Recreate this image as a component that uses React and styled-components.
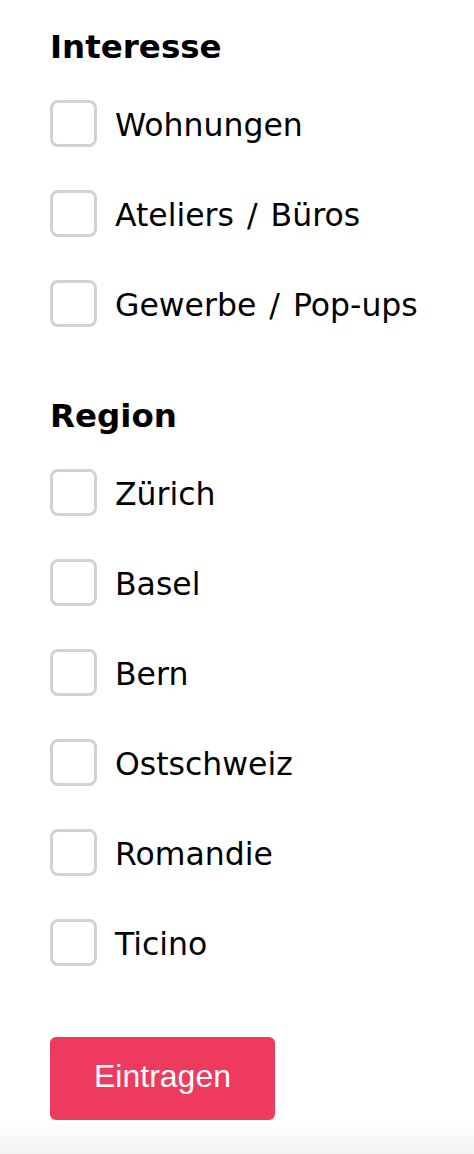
import React from 'react'
import styled, { createGlobalStyle } from 'styled-components'

const GlobalStyle = createGlobalStyle`
  html, body {
    margin: 0;
    padding: 0;
  }
  body {
    font-family: 'DejaVu Sans', Verdana, sans-serif;
    color: #000;
  }
`

const groups = [
  { id: 'interesse', title: 'Interesse', options: ['Wohnungen', 'Ateliers / Büros', 'Gewerbe / Pop-ups'] },
  { id: 'region', title: 'Region', options: ['Zürich', 'Basel', 'Bern', 'Ostschweiz', 'Romandie', 'Ticino'] },
]

const App = () => {
  return (
    <>
      <GlobalStyle />
      <Page>
        <Form onSubmit={(e) => e.preventDefault()}>
          {groups.map((group) => (
            <Group key={group.id}>
              <Heading>{group.title}</Heading>
              <Options>
                {group.options.map((option) => (
                  <Option key={option}>
                    <Box type="checkbox" name={group.id} value={option} />
                    <Text>{option}</Text>
                  </Option>
                ))}
              </Options>
            </Group>
          ))}
          <Submit type="submit">Eintragen</Submit>
        </Form>
      </Page>
    </>
  )
}

const Page = styled.div`
  min-height: 100vh;
  box-sizing: border-box;
  padding: 27px 0 0 50px;
  background: linear-gradient(to bottom, #fff calc(100% - 36px), #f3f3f3 100%);
`

const Form = styled.form`
  display: flex;
  flex-direction: column;
  align-items: flex-start;
`

const Group = styled.fieldset`
  border: 0;
  margin: 0 0 69px;
  padding: 0;
  &:last-of-type {
    margin-bottom: 71px;
  }
`

const Heading = styled.legend`
  padding: 0;
  font-size: 32.5px;
  line-height: 40px;
  font-weight: bold;
  margin-bottom: 33px;
`

const Options = styled.div`
  display: flex;
  flex-direction: column;
  gap: 43px;
`

const Option = styled.label`
  display: flex;
  align-items: center;
  gap: 18px;
  height: 47px;
`

const Text = styled.span`
  font-size: 31.5px;
  line-height: 47px;
  word-spacing: 3px;
  padding-top: 4px;
`

const Box = styled.input`
  appearance: none;
  margin: 0;
  width: 47px;
  height: 47px;
  box-sizing: border-box;
  border: 3px solid #d2d2d2;
  border-radius: 8px;
  background: #fff;
`

const Submit = styled.button`
  width: 225px;
  height: 83px;
  border: 0;
  border-radius: 6px;
  background: #ee3a5e;
  color: #fff;
  font-family: 'Liberation Sans', Arial, sans-serif;
  font-size: 32px;
  padding: 0 0 4px;
`

export default App
